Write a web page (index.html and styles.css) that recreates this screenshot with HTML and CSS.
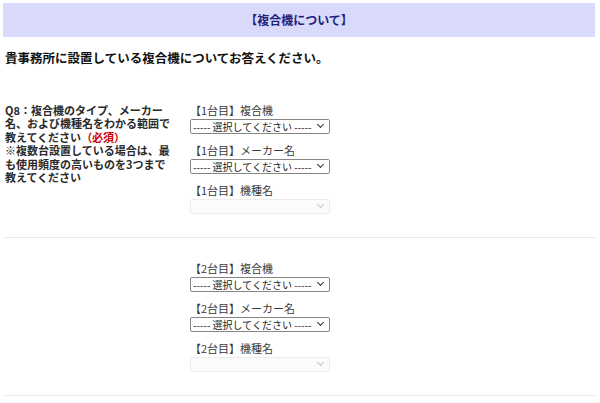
FILE: index.html
```html
<!DOCTYPE html>
<html>
<head>
    <title>複合機について</title>
    <link rel="stylesheet" href="styles.css">
</head>
<body>
    <div class="section-head">【複合機について】</div>

    <p class="lead">貴事務所に設置している複合機についてお答えください。</p>

    <!-- Q8: 1台目 -->
    <div class="q-row">
        <div class="q-text">
            Q8：複合機のタイプ、メーカー名、および機種名をわかる範囲で教えてください<span class="required">（必須）</span><br>
            ※複数台設置している場合は、最も使用頻度の高いものを3つまで教えてください
        </div>
        <div class="q-fields">
            <div class="field">
                <label for="type1">【1台目】複合機</label>
                <div class="select-wrap">
                    <select id="type1">
                        <option>----- 選択してください -----</option>
                    </select>
                </div>
            </div>
            <div class="field">
                <label for="maker1">【1台目】メーカー名</label>
                <div class="select-wrap">
                    <select id="maker1">
                        <option>----- 選択してください -----</option>
                    </select>
                </div>
            </div>
            <div class="field">
                <label for="model1">【1台目】機種名</label>
                <div class="select-wrap disabled">
                    <select id="model1" disabled>
                        <option></option>
                    </select>
                </div>
            </div>
        </div>
    </div>

    <!-- Q8: 2台目 -->
    <div class="q-row">
        <div class="q-text"></div>
        <div class="q-fields">
            <div class="field">
                <label for="type2">【2台目】複合機</label>
                <div class="select-wrap">
                    <select id="type2">
                        <option>----- 選択してください -----</option>
                    </select>
                </div>
            </div>
            <div class="field">
                <label for="maker2">【2台目】メーカー名</label>
                <div class="select-wrap">
                    <select id="maker2">
                        <option>----- 選択してください -----</option>
                    </select>
                </div>
            </div>
            <div class="field">
                <label for="model2">【2台目】機種名</label>
                <div class="select-wrap disabled">
                    <select id="model2" disabled>
                        <option></option>
                    </select>
                </div>
            </div>
        </div>
    </div>
</body>
</html>
```

FILE: styles.css
```css
body {
    font-family: "Noto Sans CJK JP", "Noto Sans", sans-serif;
    font-size: 11px;
    color: #222;
    margin: 0;
    padding: 3px 5px 0 5px;
    background-color: #fff;
}

.section-head {
    margin: 0 0 0 -2px;
    height: 34px;
    line-height: 34px;
    text-align: center;
    font-size: 12px;
    font-weight: bold;
    color: #1f1f7a;
    background-color: #d9d9fc;
}

.lead {
    margin: 13px 0 14px 0;
    font-size: 12.5px;
    line-height: 16px;
    font-weight: bold;
    color: #111;
}

.q-row {
    display: flex;
    padding: 24px 0 23px 0;
    border-bottom: 1px solid #e6e6e6;
}

.q-text {
    width: 168px;
    margin-right: 17px;
    line-height: 13.4px;
    font-weight: bold;
    color: #2a2a2a;
}

.required {
    display: inline-block;
    color: #cc0000;
}

.field {
    margin-bottom: 10px;
}

.field:last-child {
    margin-bottom: 0;
}

.field label {
    display: block;
    line-height: 13px;
    margin-bottom: 2px;
    color: #3a3a3a;
}

/* custom select box with chevron */
.select-wrap {
    position: relative;
    width: 140px;
}

.select-wrap select {
    -webkit-appearance: none;
    appearance: none;
    display: block;
    box-sizing: border-box;
    width: 140px;
    height: 15px;
    margin: 0;
    padding: 0 14px 0 2px;
    line-height: 13px;
    font-family: inherit;
    font-size: 10px;
    color: #222;
    background-color: #fff;
    border: 1px solid #858585;
    border-radius: 2px;
}

.select-wrap::after {
    content: "";
    position: absolute;
    right: 7px;
    top: 3px;
    width: 4px;
    height: 4px;
    border-right: 1.6px solid #333;
    border-bottom: 1.6px solid #333;
    transform: rotate(45deg);
    pointer-events: none;
}

.select-wrap.disabled select {
    background-color: #fafafa;
    border-color: #e6e6e6;
}

.select-wrap.disabled::after {
    border-right: 1px solid #c4c4c4;
    border-bottom: 1px solid #c4c4c4;
}
```
